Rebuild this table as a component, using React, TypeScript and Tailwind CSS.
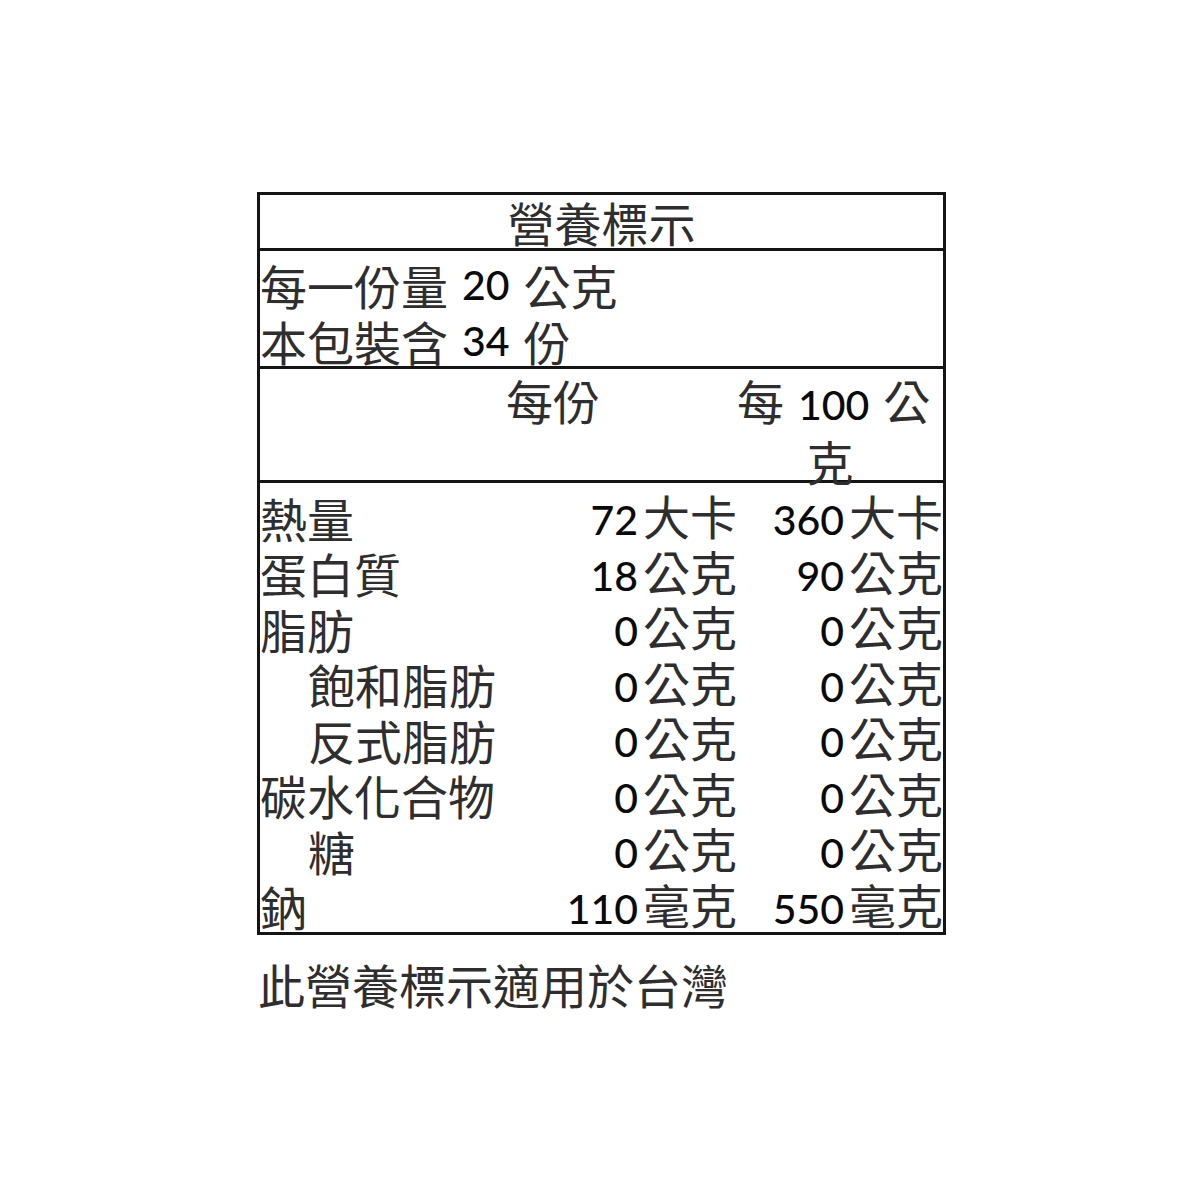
import type { ReactNode } from "react";

const rows = [
  { label: "熱量", indent: false, a: "72", b: "360", unit: "大卡" },
  { label: "蛋白質", indent: false, a: "18", b: "90", unit: "公克" },
  { label: "脂肪", indent: false, a: "0", b: "0", unit: "公克" },
  { label: "飽和脂肪", indent: true, a: "0", b: "0", unit: "公克" },
  { label: "反式脂肪", indent: true, a: "0", b: "0", unit: "公克" },
  { label: "碳水化合物", indent: false, a: "0", b: "0", unit: "公克" },
  { label: "糖", indent: true, a: "0", b: "0", unit: "公克" },
  { label: "鈉", indent: false, a: "110", b: "550", unit: "毫克" },
];

function Num({ children, className = "" }: { children: ReactNode; className?: string }) {
  return (
    <span className={`font-['Lato','Noto_Sans_CJK_TC',sans-serif] text-[41px] font-medium text-[#0a0a0a] ${className}`}>
      {children}
    </span>
  );
}

function Value({ n, unit, width }: { n: string; unit: string; width: string }) {
  return (
    <div className={`flex items-baseline justify-end ${width}`}>
      <Num>{n}</Num>
      <span className="ml-[5px]">{unit}</span>
    </div>
  );
}

export default function App() {
  return (
    <div className="min-h-[1200px] w-[1200px] bg-white pt-[192px] pl-[257px] font-['Noto_Sans_CJK_TC',sans-serif] text-[47px] leading-[50px] text-[#2e2e2e]">
      <div className="w-[689px] border-[3px] border-[#141414]">
        {/* title */}
        <div className="flex h-[56px] items-center justify-center border-b-[3px] border-[#141414]">
          營養標示
        </div>

        {/* serving info */}
        <div className="border-b-[3px] border-[#141414] pt-[6px] whitespace-nowrap">
          <div className="flex h-[56px] items-center">
            <span>每一份量</span>
            <Num className="mx-[14px]">20</Num>
            <span>公克</span>
          </div>
          <div className="flex h-[53px] items-start pt-[3px]">
            <span>本包裝含</span>
            <Num className="mx-[14px]">34</Num>
            <span>份</span>
          </div>
        </div>

        {/* column header */}
        <div className="flex h-[114px] border-b-[3px] border-[#141414] pt-[3px] leading-[56px] whitespace-nowrap">
          <div className="w-[109px]" />
          <div className="w-[368px] text-center">每份</div>
          <div className="w-[206px] pr-[20px] text-center">
            每<Num className="mx-[14px]">100</Num>公
            <br />
            克
          </div>
        </div>

        {/* nutrients */}
        <div className="h-[449px] pt-[7px] whitespace-nowrap">
          {rows.map((r) => (
            <div key={r.label} className="flex h-[55.5px] items-center">
              <div className={`min-w-0 flex-1 ${r.indent ? "pl-[48px]" : ""}`}>{r.label}</div>
              <Value n={r.a} unit={r.unit} width="w-[240px]" />
              <Value n={r.b} unit={r.unit} width="w-[206px]" />
            </div>
          ))}
        </div>
      </div>

      <div className="mt-[24px] pl-[1px]">此營養標示適用於台灣</div>
    </div>
  );
}
